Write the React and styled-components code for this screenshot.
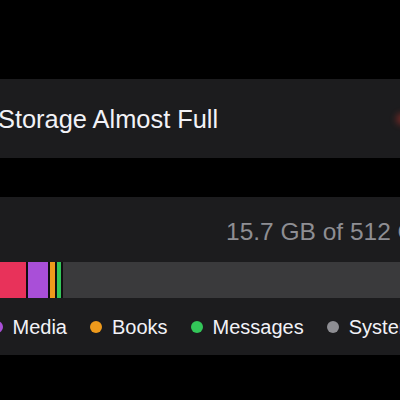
import styled, { createGlobalStyle } from "styled-components";

const GlobalStyle = createGlobalStyle`
   html, body {
      margin: 0;
      padding: 0;
      background: #000000;
   }
   body {
      font-family: 'Liberation Sans', Arial, sans-serif;
      -webkit-font-smoothing: antialiased;
   }
`;

const Screen = styled.div`
   width: 400px;
   height: 400px;
   overflow: hidden;
   background: #000000;
   display: flex;
   flex-direction: column;
   padding-top: 79px;
   box-sizing: border-box;
   gap: 39px;
`;

const Card = styled.div`
   width: 400px;
   background: #1c1c1e;
   overflow: hidden;
`;

const AlertRow = styled.div`
   height: 79px;
   display: flex;
   align-items: center;
   justify-content: space-between;
`;

const AlertTitle = styled.div`
   margin-left: -2px;
   font-size: 25.4px;
   line-height: 30px;
   color: #f2f2f7;
   white-space: nowrap;
`;

/* red glyph that sits just past the right edge, only its glow shows */
const EdgeGlow = styled.div`
   width: 12px;
   height: 12px;
   margin-right: -8px;
   border-radius: 50%;
   background: rgba(255, 59, 48, 0.35);
   filter: blur(3px);
`;

const UsageCard = styled(Card)`
   padding: 20px 0 16px;
   box-sizing: border-box;
   height: 158px;
`;

const UsageText = styled.div`
   padding-left: 226px;
   font-size: 24.5px;
   line-height: 30px;
   color: #8e8e93;
   white-space: nowrap;
`;

const Bar = styled.div`
   margin-top: 15px;
   height: 36px;
   display: flex;
   gap: 2px;
   background: #0f0f10;
`;

const Segment = styled.div`
   flex: ${(p) => (p.$rest ? "1" : "none")};
   width: ${(p) => (p.$rest ? "auto" : `${p.$w}px`)};
   background: ${(p) => p.$color};
`;

const Legend = styled.div`
   margin-top: 17px;
   margin-left: -9.5px;
   display: flex;
   gap: 23px;
   white-space: nowrap;
`;

const LegendItem = styled.div`
   display: flex;
   align-items: center;
   gap: 10px;
   font-size: 20px;
   line-height: 24px;
   color: #f2f2f7;
`;

const Dot = styled.span`
   width: 12px;
   height: 12px;
   border-radius: 50%;
   background: ${(p) => p.$color};
   flex: none;
`;

const segments = [
   { w: 26, color: "#e8325a" },
   { w: 20, color: "#a94fd8" },
   { w: 4.5, color: "#ee9a1c" },
   { w: 4.5, color: "#33c659" },
];

const legend = [
   { label: "Media", color: "#a94fd8" },
   { label: "Books", color: "#ee9a1c" },
   { label: "Messages", color: "#33c659" },
   { label: "System Data", color: "#8e8e93" },
];

const App = () => {
   return (
      <>
         <GlobalStyle />
         <Screen>
            <Card>
               <AlertRow>
                  <AlertTitle>Storage Almost Full</AlertTitle>
                  <EdgeGlow />
               </AlertRow>
            </Card>
            <UsageCard>
               <UsageText>15.7 GB of 512 GB Used</UsageText>
               <Bar>
                  {segments.map((s, i) => (
                     <Segment key={i} $w={s.w} $color={s.color} />
                  ))}
                  <Segment $rest $color="#3a3a3c" />
               </Bar>
               <Legend>
                  {legend.map((l) => (
                     <LegendItem key={l.label}>
                        <Dot $color={l.color} />
                        {l.label}
                     </LegendItem>
                  ))}
               </Legend>
            </UsageCard>
         </Screen>
      </>
   );
};

export default App;
